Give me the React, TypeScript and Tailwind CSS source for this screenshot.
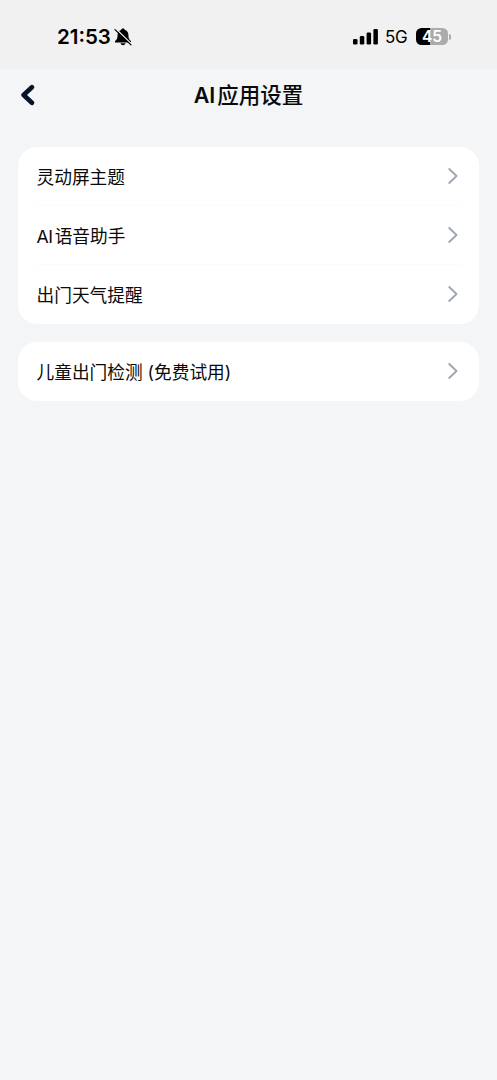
interface MenuRow {
  label: string;
  latin?: string;
}

const groups: MenuRow[][] = [
  [
    { label: '灵动屏主题' },
    { latin: 'AI', label: '语音助手' },
    { label: '出门天气提醒' },
  ],
  [{ label: '儿童出门检测 (免费试用)' }],
];

function BellOffIcon() {
  return (
    <svg className="w-[18px] h-[18px]" viewBox="0 0 18 18" fill="none">
      <path
        d="M9 .6c-1 0-1.800.6-2 1.500C4.600 2.900 3.600 4.800 3.600 7.100c0 3.300-.7 4.300-2.200 5.600-.9.900-.6 1.900.6 1.900h14c1.200 0 1.500-1 .6-1.900-1.500-1.300-2.200-2.300-2.200-5.600 0-2.300-1-4.200-3.400-5C10.800 1.200 10 .6 9 .6z"
        fill="#000"
      />
      <path d="M6.500 15.300h5c-.3 1.100-1.300 2-2.500 2s-2.200-.9-2.500-2z" fill="#000" />
      <path d="M1.700 .8l16 15.500" stroke="#f1f1f1" strokeWidth="1.400" />
      <path d="M1 1.600l16 15.300" stroke="#000" strokeWidth="1.300" strokeLinecap="round" />
    </svg>
  );
}

function SignalIcon() {
  return (
    <svg className="w-[25px] h-4" viewBox="0 0 25 16" fill="#000">
      <rect x="0" y="10" width="4.500" height="5.500" rx="1.300" />
      <rect x="6.800" y="7" width="4.500" height="8.500" rx="1.300" />
      <rect x="13.600" y="3.500" width="4.500" height="12" rx="1.300" />
      <rect x="20.400" y="0" width="4.500" height="15.500" rx="1.300" />
    </svg>
  );
}

function Battery() {
  return (
    <div className="flex items-center gap-px">
      <div className="w-8 h-[17px] rounded-[5.5px] bg-[linear-gradient(to_right,#000_45%,#ababab_45%)] flex items-center justify-center text-[15.5px] leading-none font-semibold text-white">
        45
      </div>
      <div className="w-[2px] h-[6px] rounded-r-full bg-[#ababab]" />
    </div>
  );
}

function StatusBar() {
  return (
    <div className="h-[69px] bg-[#f1f1f1] pl-[57px] pr-[46px] pt-6 flex items-start justify-between text-black">
      <div className="flex items-center h-[26px]">
        <span className="w-[57px] text-[20.5px] leading-6 font-semibold whitespace-nowrap">21:53</span>
        <BellOffIcon />
      </div>
      <div className="flex items-center h-[25px]">
        <SignalIcon />
        <span className="ml-[7px] w-[31px] pt-px text-[17px] leading-6 tracking-[-0.3px]">5G</span>
        <Battery />
      </div>
    </div>
  );
}

function Row({ row }: { row: MenuRow }) {
  return (
    <button className="w-full h-[59px] pl-[0.5px] flex items-center justify-between text-left">
      <span className="pt-[2px] text-[17.7px] leading-6 text-[#0a0a0a] whitespace-nowrap">
        {row.latin && <span className="mr-[2px] tracking-[-0.4px]">{row.latin}</span>}
        {row.label}
      </span>
      <svg className="w-[10px] h-[16px] mr-[3px] mb-px" viewBox="0 0 10 16" fill="none">
        <path d="M1.200 1l7.300 7-7.300 7" stroke="#9ca3b3" strokeWidth="1.800" strokeLinecap="round" strokeLinejoin="round" />
      </svg>
    </button>
  );
}

export default function App() {
  return (
    <div className="w-full min-h-screen bg-[#f3f5f7] font-[Inter,'Noto_Sans_CJK_SC',sans-serif]">
      <StatusBar />
      <header className="h-[52px] px-5 grid grid-cols-[1fr_auto_1fr] items-center">
        <button className="w-4 h-6 flex items-center">
          <svg className="w-4 h-[22px]" viewBox="0 0 16 22" fill="none">
            <path d="M11.900 3.200L3.600 11l8.300 7.800" stroke="#07152b" strokeWidth="4.600" strokeLinecap="round" strokeLinejoin="round" />
          </svg>
        </button>
        <h1 className="text-[21.5px] leading-8 font-medium text-[#0a0a0a] whitespace-nowrap">
          <span className="mr-[2px] font-semibold">AI</span>应用设置
        </h1>
      </header>
      <main className="px-[18px] pt-[26px] flex flex-col gap-[18px]">
        {groups.map((rows, i) => (
          <section key={i} className="bg-white rounded-[19px] px-[18px]">
            {rows.map((row, j) => (
              <div key={row.label} className={j > 0 ? 'shadow-[0_-1px_0_#fafbfb]' : ''}>
                <Row row={row} />
              </div>
            ))}
          </section>
        ))}
      </main>
    </div>
  );
}
